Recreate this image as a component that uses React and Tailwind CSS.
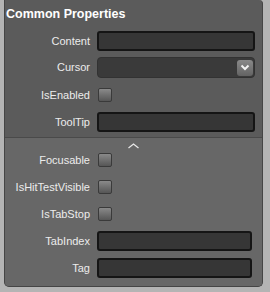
const TextRow = ({ label, narrow }) => (
  <div className="flex h-[20px] items-center">
    <div className="w-[86px] pr-[1px] text-right text-[11px] text-[#ececec]">{label}</div>
    <div
      className={`ml-[6px] h-[20px] rounded-[3px] border-2 border-[#151515] bg-[#363636] ${
        narrow ? 'w-[155px]' : 'w-[158px]'
      }`}
    />
  </div>
);

const CheckRow = ({ label }) => (
  <div className="flex h-[20px] items-center">
    <div className="w-[86px] pr-[1px] text-right text-[11px] text-[#ececec]">{label}</div>
    <div className="ml-[7px] h-[14px] w-[14px] rounded-[2px] border border-[#3a3a3a] bg-gradient-to-b from-[#8a8a8a] to-[#565656]" />
  </div>
);

const SelectRow = ({ label }) => (
  <div className="flex h-[21px] items-center">
    <div className="w-[86px] pr-[1px] text-right text-[11px] text-[#ececec]">{label}</div>
    <div className="ml-[6px] flex h-[21px] w-[158px] items-center justify-end rounded-[4px] border border-[#323232] bg-[#3a3a3a] pr-[1px]">
      <div className="flex h-[16px] w-[16px] items-center justify-center rounded-[3px] bg-gradient-to-b from-[#8a8a8a] to-[#636363]">
        <svg width="10" height="7" viewBox="0 0 10 7">
          <polyline points="1.5,1.5 5,5 8.5,1.5" fill="none" stroke="#f2f2f2" strokeWidth="2" />
        </svg>
      </div>
    </div>
  </div>
);

export default function App() {
  return (
    <div className="min-h-screen bg-[#b4b4b4] pl-[4px] font-['Liberation_Sans',Arial,sans-serif]">
      <div className="w-[259px] overflow-hidden rounded-b-[5px] rounded-tr-[4px] border border-t-0 border-[#454545] bg-[#5b5b5b]">
        <div className="border-b border-[#4a4a4a] pb-[5px]">
          <div className="h-[31px] pl-[1px] pt-[5px] text-[12.5px] font-bold text-white">Common Properties</div>
          <div className="flex flex-col">
            <TextRow label="Content" />
            <div className="mt-[6px]">
              <SelectRow label="Cursor" />
            </div>
            <div className="mt-[7px]">
              <CheckRow label="IsEnabled" />
            </div>
            <div className="mt-[7px]">
              <TextRow label="ToolTip" />
            </div>
          </div>
        </div>
        <div className="bg-[#676767] pb-[8px]">
          <div className="flex h-[12px] items-center justify-center pt-[2px]">
            <svg width="13" height="7" viewBox="0 0 13 7">
              <polyline points="1.5,6 6.5,2 11.5,6" fill="none" stroke="#e6e6e6" strokeWidth="1.3" />
            </svg>
          </div>
          <div className="flex flex-col gap-[7px]">
            <CheckRow label="Focusable" />
            <CheckRow label="IsHitTestVisible" />
            <CheckRow label="IsTabStop" />
            <TextRow label="TabIndex" narrow />
            <TextRow label="Tag" narrow />
          </div>
        </div>
      </div>
    </div>
  );
}
